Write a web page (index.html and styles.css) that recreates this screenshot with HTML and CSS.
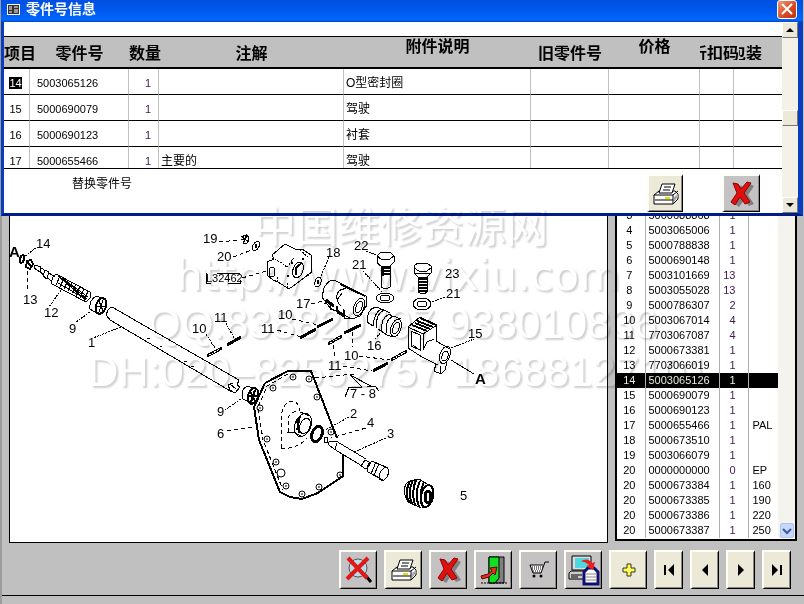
FILE: index.html
```html
<!DOCTYPE html>
<html lang="zh-CN">
<head>
<meta charset="utf-8">
<title>零件号信息</title>
<link rel="stylesheet" href="styles.css">
</head>
<body>
<svg class="defs" aria-hidden="true">
  <symbol id="printer" viewBox="0 0 26 22">
    <path d="M1 12 6 8H22L25 11V16L20 21H1Z" fill="#fff" stroke="#000"/>
    <path d="M1 12H20L25 8M20 12V21M2 17H20" fill="none" stroke="#000"/>
    <path d="M6 10 9 1H22L19 10Z" fill="#fff" stroke="#000"/>
    <path d="M11 4H18M10 7H17" stroke="#000"/>
    <path d="M21 19 25 14V11L21 14Z" fill="#aaa"/>
    <path d="M12 15H17" stroke="#e0e000" stroke-width="2"/>
  </symbol>
  <symbol id="cross" viewBox="0 0 24 26">
    <path d="M5 3 10 4 13 9 18 2 22 4 16 13 22 22 17 24 12 18 7 25 3 22 9 13Z" fill="#808080" transform="translate(2 1)"/>
    <path d="M3 2 8 3 11 8 17 1 21 2 14 12 20 21 15 23 10 16 5 24 1 21 7 12Z" fill="#e01010" stroke="#900000"/>
  </symbol>
</svg>

<main class="app">
  <div class="workspace">
    <figure class="drawing">
      <svg viewBox="10 208 597 334" role="img" aria-label="零件分解图">
        <g class="ink">
          <!-- input shaft, seal and nut -->
          <ellipse cx="22" cy="259" rx="2" ry="4" transform="rotate(20 22 259)" stroke-width="2"/>
          <path d="M25 256 36 248" class="dot"/>
          <path d="M27 261 31 260 33 264 30 269 26 267ZM28 263 31 266" stroke-width="2"/>
          <path d="M27 271V290" class="dash"/>
          <path d="M35 265 41 267 40 272 34 268ZM41 268 46 271M40 272 44 275M45 270 49 272 47 279 43 276ZM49 273 55 277M47 278 52 281"/>
          <path d="M56 274 90 292 91 297 86 302 52 284Q51 277 56 274Z"/>
          <path d="M58 276 86 300M62 278 87 299M66 281 88 297M58 283 84 298M60 276 56 285M64 278 60 287M68 280 64 289M72 282 68 291M76 284 72 293M80 286 76 296M84 289 80 298M88 291 84 301"/>
          <path d="M61 290 49 307M90 312 76 322M121 327 93 338" class="dot"/>
          <path d="M90 309Q89 300 96 296L106 299M90 309 98 314"/>
          <ellipse cx="101" cy="306" rx="5" ry="8" transform="rotate(20 101 306)" stroke-width="2"/>
          <path d="M99 301 103 311M103 300 99 312M97 306 105 306"/>
          <path d="M112 307Q106 309 107 316M112 307 239 380M107 316 110 320 232 392M239 380 237 385 240 387 235 393 230 390 228 385 233 383"/>
          <path d="M147 338H150M160 346H162M184 361H187M191 366H194M230 384 236 389"/>
          <path d="M243 399Q240 390 247 386L256 389M243 399 252 403"/>
          <ellipse cx="253" cy="396" rx="5" ry="8" transform="rotate(20 253 396)" stroke-width="2"/>
          <path d="M250 391 255 401M255 390 251 402M249 396H257" stroke-width="2"/>

          <!-- upper valve block -->
          <path d="M241 236 249 242M247 234 243 244M241 240 249 236M244 235Q252 236 247 243Q241 245 244 235"/>
          <ellipse cx="256" cy="246" rx="3" ry="5" transform="rotate(30 256 246)"/>
          <ellipse cx="256" cy="246" rx="1" ry="2"/>
          <path d="M219 242 240 240M233 257 252 250M242 278 267 271" class="dash"/>
          <path d="M272 255 285 244 297 250 302 249 311 255 312 272 289 289 278 282 273 280 267 275V262L274 259Z"/>
          <path d="M272 255V258L280 262M280 262 287 267M278 282 277 276M287 283 288 289M287 267 294 258M300 250 309 258" class="dot"/>
          <ellipse cx="298" cy="270" rx="5" ry="8" transform="rotate(20 298 270)"/>
          <path d="M296 275Q294 267 301 264" stroke-width="2"/>
          <ellipse cx="272" cy="272" rx="3" ry="5"/>
          <circle cx="303" cy="259" r="1"/><circle cx="308" cy="275" r="1"/><circle cx="292" cy="263" r="1"/><circle cx="288" cy="276" r="1"/>
          <path d="M206 273V283H211M217 273H240M228 283H240V280"/>
          <ellipse cx="318" cy="282" rx="3" ry="5" transform="rotate(20 318 282)"/>
          <ellipse cx="318" cy="282" rx="1" ry="2"/>
          <path d="M329 257 321 276M366 251 377 255M363 271 382 292M445 297 431 302" class="dot"/>

          <!-- clamp body and threaded sleeve -->
          <path d="M322 297 324 288Q328 280 334 280L366 296 367 305 360 316 352 319 330 308Z"/>
          <path d="M340 284 365 296" stroke-width="2"/>
          <path d="M346 289Q339 288 337 295Q336 302 341 306M342 293 337 300M328 302 324 304M330 303V309L336 311V306M337 306V313L343 315V309M344 310V318L352 319"/>
          <path d="M326 300 334 306M336 310 344 316" stroke-width="3"/>
          <ellipse cx="359" cy="307" rx="5" ry="9" transform="rotate(22 359 307)"/>
          <ellipse cx="359" cy="307" rx="3" ry="6" transform="rotate(22 359 307)"/>
          <path d="M311 304 327 300" class="dash"/>
          <path d="M376 307Q367 309 367 322L373 326M376 307 384 310M377 328Q375 314 384 310L390 313M373 326Q374 313 381 309M382 331Q380 319 389 314L393 317M387 333Q384 321 393 316L401 319M378 329 387 335 393 337"/>
          <ellipse cx="396" cy="328" rx="5" ry="9" transform="rotate(20 396 328)"/>
          <ellipse cx="396" cy="328" rx="3" ry="6" transform="rotate(20 396 328)"/>
          <path d="M375 339 382 331" class="dot"/>

          <!-- banjo bolts and washers -->
          <path d="M377 256V263L381 266H390L394 262V256L390 252H381ZM377 256 381 259H390L394 256M381 266V287Q385 290 390 287V266"/>
          <path d="M381 268H390M381 271H390M381 274H390M383 269V276" stroke-width="2"/>
          <ellipse cx="385" cy="298" rx="9" ry="5"/><ellipse cx="385" cy="298" rx="5" ry="3"/>
          <path d="M414 266V273L418 277H427L431 273V266L427 263H418ZM414 268 419 271H427L431 268M414 273H431M418 277V292Q423 296 427 292V277"/>
          <path d="M418 279H427M418 282H427M418 285H427M418 288H427M418 291H427" stroke-width="2"/>
          <ellipse cx="422" cy="304" rx="9" ry="6"/><ellipse cx="422" cy="304" rx="5" ry="3"/>

          <!-- outlet block -->
          <path d="M408 327 420 317 437 325 436 341 450 349M408 327 423 334 437 325M408 327V348L422 357M423 334V349M411 331V346L420 350V335ZM422 357 438 365"/>
          <path d="M423 350 427 342 434 339"/>
          <path d="M412 325 427 331M415 323 430 329M417 321 433 327M420 318 436 325" stroke-width="2"/>
          <ellipse cx="445" cy="355" rx="5" ry="9" transform="rotate(20 445 355)"/>
          <ellipse cx="445" cy="356" rx="3" ry="5" transform="rotate(20 445 356)"/>
          <path d="M436 364 434 371 441 374 445 370 447 362M441 374 440 366M413 345 419 350"/>
          <path d="M451 348 474 339" class="dot"/>
          <path d="M451 360 474 374"/>

          <!-- screws and their leaders -->
          <path d="M207 356 222 348M227 345 241 337M300 338 316 329M317 327 333 319M328 344 342 336M344 333 361 325M373 371 388 363M391 360 407 351" stroke-width="3"/>
          <path d="M209 355 220 349M330 343 340 337M393 359 405 352" stroke="#fff" class="dot"/>
          <path d="M206 334 215 348M226 323 234 338" class="dot"/>
          <path d="M292 319 318 325M277 330 301 337M352 332V347M333 345 335 359M359 356 390 360M343 366 372 371M315 378 354 374" class="dash"/>
          <path d="M350 375 362 387M350 375 371 386M345 397 349 387H362M367 386H375L379 391"/>

          <!-- cover plate -->
          <path d="M265 383 288 371H311L337 438M343 455V476L318 493 302 499 290 497 280 492 259 440 254 407 265 383" stroke-width="2"/>
          <path d="M288 374 267 386 258 407 263 440 283 490" class="dash"/>
          <g class="holes">
            <circle cx="293" cy="377" r="3"/><circle cx="309" cy="379" r="3"/><circle cx="317" cy="397" r="3"/><circle cx="331" cy="432" r="3"/>
            <circle cx="340" cy="475" r="3"/><circle cx="319" cy="487" r="3"/><circle cx="302" cy="494" r="3"/><circle cx="286" cy="486" r="3"/>
            <circle cx="276" cy="462" r="3"/><circle cx="267" cy="439" r="3"/><circle cx="260" cy="408" r="3"/><circle cx="273" cy="388" r="3"/>
            <path d="M293 376V378M309 378V380M317 396V398M331 431V433M340 474V476M319 486V488M302 493V495M286 485V487M276 461V463M267 438V440M260 407V409M273 387V389"/>
            <circle cx="281" cy="473" r="4"/>
          </g>
          <path d="M281 448V417Q283 402 292 401Q299 402 300 411M281 448Q296 450 307 438M288 432V418Q291 411 299 411" class="dash"/>
          <path d="M287 432H296M300 412 310 416M293 432 303 437"/>
          <ellipse cx="303" cy="425" rx="8" ry="12" transform="rotate(22 303 425)"/>
          <ellipse cx="305" cy="426" rx="5" ry="8" transform="rotate(22 305 426)"/>
          <path d="M297 419 299 433M300 416 297 430" stroke-width="2"/>
          <ellipse cx="317" cy="434" rx="5" ry="8" transform="rotate(22 317 434)" stroke-width="3"/>
          <ellipse cx="326" cy="440" rx="2" ry="3"/>
          <path d="M330 441 336 441 366 459M330 446 334 449 362 466M330 441Q327 444 330 446M337 443 335 449"/>
          <path d="M365 460 361 466 366 469 371 463ZM372 461Q365 465 368 472M372 461 388 468M368 472 383 480M376 462 371 474M379 464 374 475"/>
          <ellipse cx="384" cy="474" rx="4" ry="7" transform="rotate(24 384 474)"/>
          <path d="M349 417 325 430M386 438 354 452M241 399 225 410" class="dot"/>
          <path d="M366 428 331 438M227 431 255 427" class="dash"/>

          <!-- bellows -->
          <path d="M404 493Q404 483 410 481L419 479 432 487M404 493 408 502 421 508"/>
          <path d="M410 481Q404 492 409 502M413 480Q407 492 412 504M416 480Q411 492 415 505M420 481Q414 493 419 507M424 482Q418 494 423 508" stroke-width="2"/>
          <ellipse cx="427" cy="496" rx="6" ry="11" transform="rotate(12 427 496)" stroke-width="2"/>
          <ellipse cx="428" cy="497" rx="3" ry="6" stroke-width="3"/>
        </g>
        <g class="callouts">
          <text x="9" y="257" class="view">A</text><text x="475" y="384" class="view">A</text>
          <text x="36" y="248">14</text><text x="23" y="304">13</text><text x="44" y="317">12</text>
          <text x="69" y="333">9</text><text x="88" y="347">1</text><text x="203" y="243">19</text>
          <text x="217" y="261">20</text><text x="206" y="282" class="ref">L32462</text><text x="326" y="257">18</text>
          <text x="296" y="308">17</text><text x="278" y="319">10</text><text x="261" y="333">11</text>
          <text x="192" y="333">10</text><text x="214" y="322">11</text><text x="354" y="250">22</text>
          <text x="352" y="269">21</text><text x="445" y="278">23</text><text x="446" y="298">21</text>
          <text x="367" y="350">16</text><text x="344" y="360">10</text><text x="328" y="370">11</text>
          <text x="468" y="338">15</text><text x="350" y="398">7 - 8</text><text x="350" y="418">2</text>
          <text x="367" y="427">4</text><text x="387" y="438">3</text><text x="217" y="416">9</text>
          <text x="217" y="438">6</text><text x="460" y="500">5</text>
        </g>
      </svg>
    </figure>

    <section class="parts">
      <table class="parts-table">
        <colgroup><col class="p-item"><col><col class="p-qty"><col class="p-note"></colgroup>
        <tbody>
          <tr><td>3</td><td>5000688868</td><td>1</td><td></td></tr>
          <tr><td>4</td><td>5003065006</td><td>1</td><td></td></tr>
          <tr><td>5</td><td>5000788838</td><td>1</td><td></td></tr>
          <tr><td>6</td><td>5000690148</td><td>1</td><td></td></tr>
          <tr><td>7</td><td>5003101669</td><td>13</td><td></td></tr>
          <tr><td>8</td><td>5003055028</td><td>13</td><td></td></tr>
          <tr><td>9</td><td>5000786307</td><td>2</td><td></td></tr>
          <tr><td>10</td><td>5003067014</td><td>4</td><td></td></tr>
          <tr><td>11</td><td>7703067087</td><td>4</td><td></td></tr>
          <tr><td>12</td><td>5000673381</td><td>1</td><td></td></tr>
          <tr><td>13</td><td>7703066019</td><td>1</td><td></td></tr>
          <tr class="selected"><td>14</td><td>5003065126</td><td>1</td><td></td></tr>
          <tr><td>15</td><td>5000690079</td><td>1</td><td></td></tr>
          <tr><td>16</td><td>5000690123</td><td>1</td><td></td></tr>
          <tr><td>17</td><td>5000655466</td><td>1</td><td>PAL</td></tr>
          <tr><td>18</td><td>5000673510</td><td>1</td><td></td></tr>
          <tr><td>19</td><td>5003066079</td><td>1</td><td></td></tr>
          <tr><td>20</td><td>0000000000</td><td>0</td><td>EP</td></tr>
          <tr><td>20</td><td>5000673384</td><td>1</td><td>160</td></tr>
          <tr><td>20</td><td>5000673385</td><td>1</td><td>190</td></tr>
          <tr><td>20</td><td>5000673386</td><td>1</td><td>220</td></tr>
          <tr><td>20</td><td>5000673387</td><td>1</td><td>250</td></tr>
        </tbody>
      </table>
      <div class="parts-scroll">
        <button type="button" class="xp-down" aria-label="向下滚动"><svg viewBox="0 0 10 8"><path d="M1 2 5 6 9 2" fill="none" stroke="#3c5a9a" stroke-width="2"/></svg></button>
      </div>
    </section>
  </div>

  <nav class="toolbar">
    <button type="button" class="tool" aria-label="取消缩放">
      <svg width="28" height="28" viewBox="0 0 28 28"><circle cx="13" cy="12" r="9" fill="#b8dce8" stroke="#555"/><path d="M20 19 26 26" stroke="#000" stroke-width="3"/><path d="M3 2 22 22M23 2 2 23" stroke="#e01818" stroke-width="4"/></svg>
    </button>
    <button type="button" class="tool light" aria-label="打印"><svg width="26" height="22"><use href="#printer"/></svg></button>
    <button type="button" class="tool" aria-label="删除"><svg width="24" height="26"><use href="#cross"/></svg></button>
    <button type="button" class="tool" aria-label="退出">
      <svg width="28" height="28" viewBox="0 0 28 28"><path d="M9 1H24V27H9Z" fill="#808080" stroke="#000"/><path d="M9 1H19V22L15 27H9Z" fill="#10e020" stroke="#000"/><path d="M1 27H27" stroke="#000" stroke-dasharray="2 1"/><path d="M1 20 8 18 12 15 10 12 17 11 15 19 13 17 9 21 2 23Z" fill="#e03020" stroke="#600000"/></svg>
    </button>
    <button type="button" class="tool" aria-label="购物车">
      <svg width="22" height="18" viewBox="0 0 22 18"><path d="M3 4H15L13 11H5Z" fill="#fff"/><path d="M21 1H17L13 12H5L2 4H15" fill="none" stroke="#000"/><path d="M4 6H15M4 8H14M5 10H13" stroke="#000" stroke-dasharray="1 1"/><circle cx="6" cy="15" r="1.5"/><circle cx="13" cy="15" r="1.5"/></svg>
    </button>
    <button type="button" class="tool" aria-label="复制到文件">
      <svg width="32" height="32" viewBox="0 0 32 32"><path d="M18 19 31 19V31H18Z" fill="#808080"/><path d="M4 2H23V16H4Z" fill="#ddd" stroke="#000"/><path d="M7 4H21V14H7Z" fill="#50d8e0"/><path d="M3 17H19V25H1V19Z" fill="#ccc" stroke="#000"/><path d="M3 21H14M3 23H10" stroke="#000"/><path d="M16 30V18L20 14H26L30 18V30Z" fill="#fff" stroke="#101070" stroke-width="3"/><path d="M18 20H28M18 23H28M18 26H28" stroke="#888"/><path d="M13 7Q20 3 24 9L27 8 25 16 18 12 21 11Q18 8 13 7Z" fill="#e82020"/></svg>
    </button>
    <button type="button" class="tool light" aria-label="添加"><svg width="14" height="14" viewBox="0 0 14 14"><path d="M5 1H9V5H13V9H9V13H5V9H1V5H5Z" fill="#ffff50" stroke="#333"/></svg></button>
    <button type="button" class="tool light narrow" aria-label="第一条"><svg width="12" height="12" viewBox="0 0 12 12"><path d="M1 1H3V11H1ZM11 0V12L5 6Z"/></svg></button>
    <button type="button" class="tool light narrow" aria-label="上一条"><svg width="12" height="12" viewBox="0 0 12 12"><path d="M9 0V12L3 6Z"/></svg></button>
    <button type="button" class="tool light narrow" aria-label="下一条"><svg width="12" height="12" viewBox="0 0 12 12"><path d="M3 0V12L9 6Z"/></svg></button>
    <button type="button" class="tool light narrow" aria-label="最后一条"><svg width="12" height="12" viewBox="0 0 12 12"><path d="M1 0V12L7 6ZM9 1H11V11H9Z"/></svg></button>
  </nav>
</main>

<section class="dialog" role="dialog" aria-labelledby="dialog-title">
  <header class="titlebar">
    <svg width="13" height="11" viewBox="0 0 13 11"><path d="M0 0H13V11H0Z" fill="#fff"/><path d="M1 1H12V10H1Z" fill="#333"/><path d="M2 3H5M2 5H5M2 8H5M7 3H11M7 6H11M7 8H11" stroke="#fff"/></svg>
    <h1 id="dialog-title">零件号信息</h1>
    <button type="button" class="close" aria-label="关闭"><svg viewBox="0 0 12 12"><path d="M1 1 11 11M11 1 1 11" stroke="#fff" stroke-width="2"/></svg></button>
  </header>
  <div class="dialog-body">
    <div class="dialog-content">
      <div class="table-clip">
        <table class="info">
          <colgroup><col class="c-item"><col class="c-part"><col class="c-qty"><col class="c-note"><col><col class="c-old"><col class="c-price"><col class="c-code"><col class="c-pack"></colgroup>
          <thead>
            <tr>
              <th>项目</th><th>零件号</th><th>数量</th><th>注解</th><th class="raised">附件说明</th><th>旧零件号</th><th class="raised">价格</th>
              <th colspan="2"><span class="cut-group"><span class="cut code">折扣码</span><span class="cut pack">包装</span></span></th>
            </tr>
          </thead>
          <tbody>
            <tr><td><mark>14</mark></td><td>5003065126</td><td>1</td><td></td><td>O型密封圈</td><td></td><td></td><td></td><td></td></tr>
            <tr><td>15</td><td>5000690079</td><td>1</td><td></td><td>驾驶</td><td></td><td></td><td></td><td></td></tr>
            <tr><td>16</td><td>5000690123</td><td>1</td><td></td><td>衬套</td><td></td><td></td><td></td><td></td></tr>
            <tr><td>17</td><td>5000655466</td><td>1</td><td>主要的</td><td>驾驶</td><td></td><td></td><td></td><td></td></tr>
          </tbody>
        </table>
      </div>
      <footer class="dialog-foot">
        <span class="replace">替换零件号</span>
        <button type="button" class="tool light" aria-label="打印"><svg width="26" height="22"><use href="#printer"/></svg></button>
        <button type="button" class="tool" aria-label="关闭窗口"><svg width="24" height="26"><use href="#cross"/></svg></button>
      </footer>
    </div>
    <div class="scrollbar">
      <button type="button" aria-label="向上"><svg viewBox="0 0 8 4"><path d="M4 0 8 4H0Z"/></svg></button>
      <span class="thumb"></span>
      <button type="button" aria-label="向下"><svg viewBox="0 0 8 4"><path d="M0 0H8L4 4Z"/></svg></button>
    </div>
  </div>
</section>

<div class="watermark">
  <p class="wm-name">中国维修资源网</p>
  <p class="wm-url">http://www.vixiu.com</p>
  <p class="wm-qq">QQ:838820797 938010836</p>
  <p class="wm-tel">DH:020–82562757 18688127101</p>
</div>
</body>
</html>
```
FILE: styles.css
```css
* { box-sizing: border-box; }

body {
  margin: 0;
  min-height: 100vh;
  position: relative;
  overflow: hidden;
  background: #c0c0c0;
  color: #000;
  font: 11px/15px "Liberation Sans", "Noto Sans CJK SC", sans-serif;
}

button { padding: 0; font: inherit; }
.defs { position: absolute; width: 0; height: 0; }

/* Main form */
.app {
  min-height: 100vh;
  padding: 207px 0 8px;
  border-left: 2px solid #9c9c98;
}
.workspace {
  display: grid;
  grid-template-columns: minmax(0, 1fr) 182px;
  gap: 7px;
  align-items: start;
  padding: 0 7px;
}
.drawing {
  margin: 0;
  background: #fff;
  border: 1px solid #000;
}
.drawing svg { display: block; width: 100%; }
.ink { fill: none; stroke: #000; shape-rendering: crispEdges; }
.holes { shape-rendering: geometricPrecision; }
.dash { stroke-dasharray: 4 3; }
.dot { stroke-dasharray: 2 1; }
.callouts { font-size: 13px; }
.callouts .view { font-size: 15px; font-weight: bold; }
.callouts .ref { font-size: 11px; }

.parts {
  display: flex;
  background: #fff;
  border: 1px solid #000;
  border-width: 0 2px 2px;
  padding: 1px 0;
}
.parts-table { flex: 1; border-collapse: collapse; table-layout: fixed; width: 0; }
.p-item { width: 28px; }
.p-qty { width: 29px; }
.p-note { width: 30px; }
.parts-table td { height: 15px; padding: 0; white-space: nowrap; border-right: 1px solid #b0b0b0; }
.parts-table td:nth-child(1) { padding-right: 3px; text-align: center; }
.parts-table td:nth-child(2) { padding-left: 3px; }
.parts-table td:nth-child(3) { padding-right: 12px; text-align: right; color: #401850; }
.parts-table td:nth-child(4) { padding-left: 4px; border-right: 0; }
.parts-table .selected td { background: #000; color: #e8f0e0; }
.parts-scroll {
  width: 17px;
  display: flex;
  flex-direction: column;
  justify-content: flex-end;
  align-items: center;
  background: #f4f3ee;
}
.xp-down {
  width: 14px;
  height: 15px;
  border: 1px solid #b0c4f4;
  border-radius: 2px;
  background: #c6d6fc;
}
.xp-down svg { display: block; width: 10px; margin: auto; }

.toolbar {
  display: flex;
  justify-content: flex-end;
  gap: 7px;
  padding: 7px 13px 6px 0;
  border-bottom: 1px solid #000;
}
.tool {
  display: grid;
  place-items: center;
  width: 38px;
  height: 39px;
  background: #c4c2c2;
  border: 2px solid;
  border-color: #fffef4 #000 #000 #fffef4;
  border-right-width: 1px;
  border-bottom-width: 1px;
  box-shadow: inset -1px -1px #8c8a80;
}
.tool.light { background: #ece9d8; }
.tool.narrow { width: 29px; }

/* Part information window */
.dialog {
  position: absolute;
  top: 0;
  left: 1px;
  right: 1px;
  background: #fff;
  border: solid #0a3cc0;
  border-width: 0 5px 3px 3px;
  border-bottom-color: #001c88;
}
.titlebar {
  display: flex;
  align-items: center;
  gap: 6px;
  height: 22px;
  margin: 0 -5px 0 -3px;
  padding: 0 6px 4px;
  background: linear-gradient(#0050e0, #0058ee 50%, #0068ff 90%, #0048c8);
}
.titlebar h1 {
  flex: 1;
  margin: 0;
  color: #fff;
  font-size: 14px;
  line-height: 18px;
}
.close {
  width: 20px;
  height: 19px;
  border: 1px solid #fff;
  border-radius: 3px;
  background: linear-gradient(135deg, #f09878, #d84820 60%, #b83410);
}
.close svg { display: block; width: 12px; margin: auto; }
.dialog-body { display: flex; }
.dialog-content { flex: 1; min-width: 0; padding-top: 14px; }
.table-clip { height: 133px; overflow: hidden; border-bottom: 1px solid #000; }
.info { width: 100%; table-layout: fixed; border-collapse: separate; border-spacing: 0; }
.c-item { width: 26px; }
.c-part { width: 99px; }
.c-qty { width: 30px; }
.c-note { width: 185px; }
.c-old { width: 78px; }
.c-price { width: 91px; }
.c-code { width: 34px; }
.c-pack { width: 48px; }
.info th {
  height: 33px;
  padding: 0;
  background: #c0c0c0;
  border-top: 1px solid #000;
  border-bottom: 2px solid #000;
  font: bold 16px/16px "Noto Sans CJK SC", sans-serif;
  white-space: nowrap;
}
.info th.raised { padding-bottom: 14px; }
.cut-group { display: flex; }
.cut { display: flex; justify-content: flex-end; overflow: hidden; }
.cut.code { width: 39px; }
.cut.pack { width: 23px; }
.info td {
  height: 26px;
  padding: 3px 2px 0;
  border-right: 1px solid #c0c0c0;
  border-bottom: 1px solid #000;
  white-space: nowrap;
}
.info td:nth-child(1) { padding-right: 4px; text-align: center; }
.info td:nth-child(2) { padding-left: 7px; }
.info td:nth-child(3) { padding-right: 7px; text-align: right; color: #401850; }
.info td:nth-child(4), .info td:nth-child(5) { font-size: 12px; }
.info td:nth-child(9) { border-right: 0; }
.info mark { background: #000; color: #fff; }

.dialog-foot { display: flex; padding: 5px 22px 1px 68px; }
.replace { flex: 1; padding-top: 3px; font-size: 12px; }
.dialog-foot .tool { height: 38px; }
.dialog-foot .light { width: 36px; margin-right: 39px; }

.scrollbar {
  display: flex;
  flex-direction: column;
  width: 16px;
  background: #f4f2e8;
}
.scrollbar button, .thumb {
  height: 16px;
  background: #ece9d8;
  border: 1px solid;
  border-color: #fff #777 #777 #fff;
}
.scrollbar svg { display: block; width: 8px; margin: auto; }
.thumb { margin: auto 0; }

/* Embossed site mark over the whole form */
.watermark {
  position: absolute;
  top: 204px;
  left: 88px;
  color: #fff;
  font-size: 42px;
  line-height: 48px;
  white-space: nowrap;
  text-shadow: 2px 2px 2px #d0d0d0;
  mix-blend-mode: multiply;
  pointer-events: none;
}
.watermark p { margin: 0; }
.wm-name { padding-left: 166px; }
.wm-url { padding-left: 88px; font-family: "DejaVu Sans", sans-serif; }
.wm-qq { padding-left: 60px; }
```
